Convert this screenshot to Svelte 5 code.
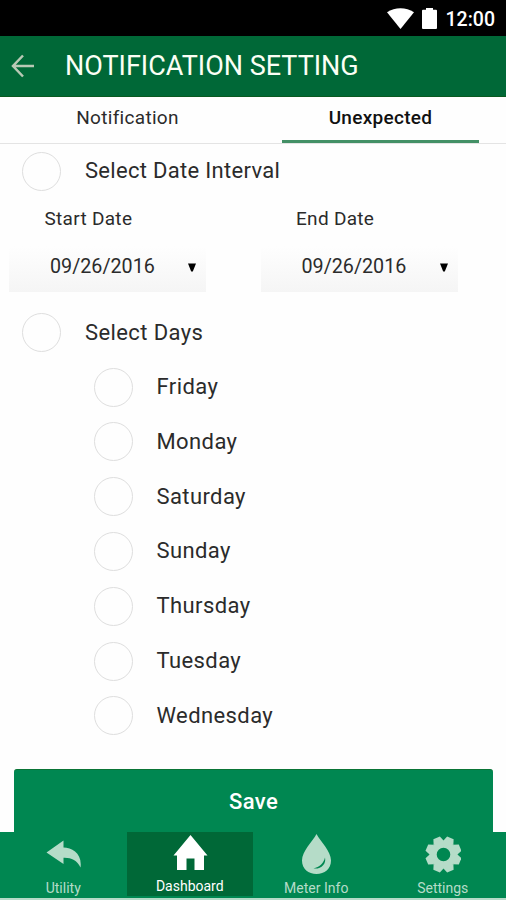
<script>
  let activeTab = 'Unexpected'
  let byInterval = false
  let byDays = false
  let startDate = '09/26/2016'
  let endDate = '09/26/2016'
  let selectedDays = []

  const tabs = ['Notification', 'Unexpected']
  const days = ['Friday', 'Monday', 'Saturday', 'Sunday', 'Thursday', 'Tuesday', 'Wednesday']

  const toggleDay = day => {
    selectedDays = selectedDays.includes(day)
      ? selectedDays.filter(d => d !== day)
      : [...selectedDays, day]
  }
</script>

<main class="screen">
  <div class="status-bar">
    <svg class="wifi" viewBox="0 0 27 21" aria-hidden="true">
      <path d="M0 4.2C8-1.2 19-1.2 27 4.2L13.5 21z" />
    </svg>
    <svg class="battery" viewBox="0 0 15 21" aria-hidden="true">
      <path d="M1 1.800h3V0h7v1.800h3q1 0 1 1V20q0 1-1 1H1q-1 0-1-1V2.800q0-1 1-1z" />
    </svg>
    <span class="clock">12:00</span>
  </div>

  <header class="header">
    <svg class="back" viewBox="0 0 24 24" aria-hidden="true">
      <path d="M13 1.500L3 12L13 22.500M3 12H24" />
    </svg>
    <h1 class="header-title">NOTIFICATION SETTING</h1>
  </header>

  <div class="tabs">
    {#each tabs as tab}
      <button class="tab" class:tab-active={activeTab === tab} on:click={() => (activeTab = tab)}>
        <span>{tab}</span>
      </button>
    {/each}
  </div>

  <div class="content">
    <button class="option" on:click={() => (byInterval = !byInterval)}>
      <span class="circle" class:circle-on={byInterval}></span>
      <span class="interval-label">Select Date Interval</span>
    </button>

    <div class="dates">
      <div class="date">
        <div class="date-label">Start Date</div>
        <div class="date-select">
          <span>{startDate}</span>
          <svg class="caret" viewBox="0 0 8 9" aria-hidden="true"><path d="M0 0.500h8L4.800 8.500H3.200z" /></svg>
        </div>
      </div>
      <div class="date">
        <div class="date-label">End Date</div>
        <div class="date-select">
          <span>{endDate}</span>
          <svg class="caret" viewBox="0 0 8 9" aria-hidden="true"><path d="M0 0.500h8L4.800 8.500H3.200z" /></svg>
        </div>
      </div>
    </div>

    <button class="option" on:click={() => (byDays = !byDays)}>
      <span class="circle" class:circle-on={byDays}></span>
      <span>Select Days</span>
    </button>

    <div class="days">
      {#each days as day}
        <button class="option" on:click={() => toggleDay(day)}>
          <span class="circle" class:circle-on={selectedDays.includes(day)}></span>
          <span>{day}</span>
        </button>
      {/each}
    </div>
  </div>

  <button class="save">Save</button>

  <nav class="nav">
    <div class="nav-item">
      <svg viewBox="0 0 36 40" aria-hidden="true">
        <path d="M1.500 18.500L18.500 6.500v7C27 13.500 37.500 19.500 35.500 33.500C32 26 26 23.500 18.500 23.800V30z" />
      </svg>
      <span>Utility</span>
    </div>
    <div class="nav-item nav-active">
      <svg viewBox="0 0 36 40" aria-hidden="true">
        <path d="M18.500 1L35.500 21.500H32V36H22.500V24.500H14.500V36H5V21.500H1.500z" />
      </svg>
      <span>Dashboard</span>
    </div>
    <div class="nav-item">
      <svg viewBox="0 0 36 40" aria-hidden="true">
        <path d="M18.500 0C22.500 7.500 33 17 33 26.500C33 35 26.500 40 18.500 40S4 35 4 26.500C4 17 14.500 7.500 18.500 0z" />
        <path class="shine" d="M27 23.500C28.500 30 23 35.500 15.500 34.500C21.500 33 25.500 29.500 27 23.500z" />
      </svg>
      <span>Meter Info</span>
    </div>
    <div class="nav-item">
      <svg viewBox="0 0 36 40" aria-hidden="true">
        <g transform="translate(18.500 20.500)">
          {#each [0, 45, 90, 135, 180, 225, 270, 315] as angle}
            <path d="M-5.500-12.500L-3.500-18H3.500L5.500-12.500z" transform="rotate({angle + 22.5})" />
          {/each}
          <circle class="gear-ring" r="10.300" />
        </g>
      </svg>
      <span>Settings</span>
    </div>
  </nav>
</main>

<style>
  :global(body) {
    background: #fff;
  }
  .screen {
    display: flex;
    flex-direction: column;
    width: 506px;
    height: 900px;
    box-sizing: border-box;
    overflow: hidden;
    background: #fefefe;
    border-bottom: 2px solid #b5dbc8;
    color: #2b2b2b;
    font-family: Roboto, sans-serif;
  }
  button {
    padding: 0;
    border: none;
    background: none;
    color: inherit;
    font-family: inherit;
    cursor: pointer;
  }
  .status-bar {
    display: flex;
    flex: none;
    align-items: center;
    justify-content: flex-end;
    height: 36px;
    padding-right: 11px;
    box-sizing: border-box;
    background: #000;
    color: #fff;
  }
  .wifi {
    width: 27px;
    height: 21px;
    fill: #fff;
    margin-right: 8px;
  }
  .battery {
    width: 15px;
    height: 21px;
    fill: #fff;
    margin-right: 9px;
  }
  .clock {
    padding-top: 3px;
    font-size: 19.500px;
    font-weight: 500;
    line-height: 24px;
  }
  .header {
    display: flex;
    flex: none;
    align-items: center;
    height: 61px;
    padding-left: 10px;
    box-sizing: border-box;
    background: #006837;
    box-shadow: inset 0 -1px #0a5a20;
  }
  .back {
    width: 24px;
    height: 24px;
    margin-right: 31px;
    margin-bottom: 2px;
    fill: none;
    stroke: #b9c9b5;
    stroke-width: 2.500;
  }
  .header-title {
    margin: 0 0 2px;
    color: #fbfff5;
    font-size: 27px;
    font-weight: 400;
    white-space: nowrap;
  }
  .tabs {
    display: flex;
    flex: none;
    height: 47px;
    padding: 0 27px;
    box-sizing: border-box;
    justify-content: space-between;
    border-bottom: 1.500px solid #e4e4e4;
  }
  .tab {
    width: 197px;
    height: 46px;
    padding-bottom: 3px;
    font-size: 19px;
    letter-spacing: 0.3px;
    border-bottom: 3px solid transparent;
  }
  .tab:first-child {
    margin-left: 2px;
  }
  .tab-active {
    color: #111;
    font-weight: 500;
    border-bottom-color: #439066;
  }
  .content {
    flex: 1;
    padding-top: 7px;
  }
  .option {
    display: flex;
    align-items: center;
    height: 40px;
    padding-left: 22px;
    font-size: 22px;
    line-height: 26px;
    letter-spacing: 0.4px;
    gap: 24px;
  }
  .circle {
    width: 39px;
    height: 39px;
    box-sizing: border-box;
    border: 1.500px solid #dedede;
    border-radius: 50%;
  }
  .circle-on {
    background: #008751;
  }
  .interval-label {
    letter-spacing: 0.3px;
  }
  .dates {
    display: flex;
    gap: 54.500px;
    height: 121.500px;
    padding: 16px 0 0 9px;
    box-sizing: border-box;
  }
  .date {
    width: 197px;
  }
  .date-label {
    padding-left: 35.500px;
    font-size: 19px;
    line-height: 24px;
    letter-spacing: 0.3px;
  }
  .date-select {
    display: flex;
    align-items: center;
    justify-content: space-between;
    height: 46px;
    margin-top: 15px;
    padding: 0 10px 5px 41px;
    box-sizing: border-box;
    background: linear-gradient(#fefefe, #f5f5f5);
    font-size: 19.700px;
  }
  .caret {
    width: 8px;
    height: 9px;
    margin-top: 2px;
    fill: #000;
  }
  .days {
    display: flex;
    flex-direction: column;
    gap: 14.800px;
    padding: 14.600px 0 0 71.500px;
  }
  .save {
    flex: none;
    height: 63px;
    margin: 0 13px 0 14px;
    border-top: 1px solid #0a7436;
    border-radius: 3px 3px 0 0;
    background: #008751;
    color: #fff;
    font-size: 22px;
    font-weight: 500;
    letter-spacing: 0.4px;
  }
  .nav {
    display: flex;
    flex: none;
    height: 66px;
    background: #008751;
    color: #b5dcc8;
  }
  .nav-item {
    display: flex;
    flex: 1;
    flex-direction: column;
    align-items: center;
    padding-top: 2px;
    box-sizing: border-box;
    font-size: 14px;
    line-height: 18px;
  }
  .nav-item svg {
    width: 36px;
    height: 40px;
    margin-bottom: 5px;
    fill: #b5dcc8;
  }
  .nav-item .shine {
    fill: #008751;
  }
  .nav-item .gear-ring {
    fill: none;
    stroke: #b5dcc8;
    stroke-width: 7;
  }
  .nav-active {
    height: 64px;
    background: #006837;
    color: #fff;
  }
  .nav-item.nav-active svg {
    fill: #fff;
    margin-bottom: 3px;
  }
</style>
